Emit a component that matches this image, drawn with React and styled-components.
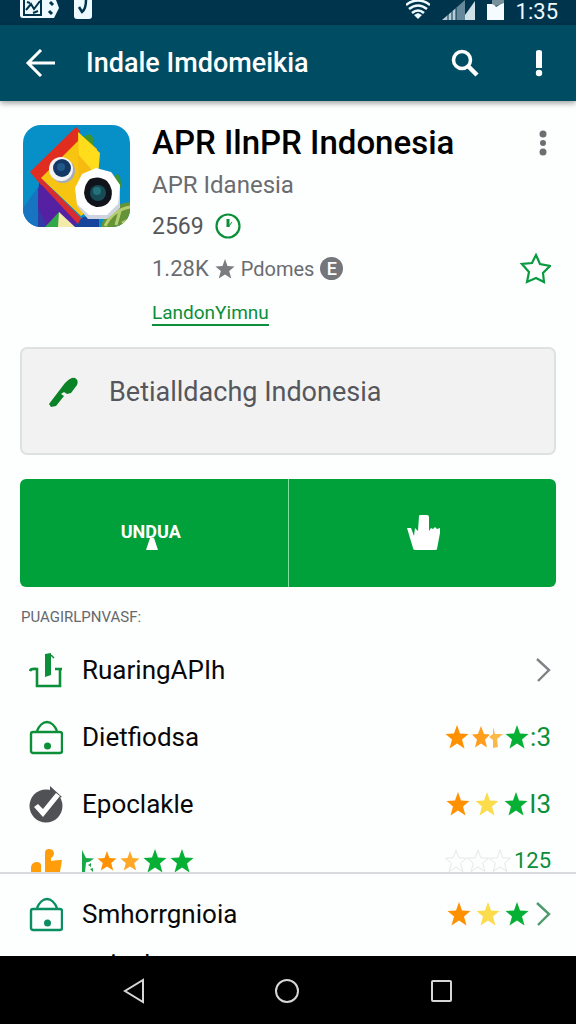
import React from "react";
import styled, { createGlobalStyle } from "styled-components";

const GREEN = "#00a03a";
const ICON_GREEN = "#0b8f38";
const STAR_PATH =
  "M12 0 L15 8.500 L23.500 9 L17 14.400 L19.500 23.500 L12 18.500 L4.500 23.500 L7 14.400 L.5 9 L9 8.500 Z";
const STAR_COLORS = { orange: "#ff9100", amber: "#ffa726", yellow: "#fbdc4c", green: "#05b035" };

const GlobalStyle = createGlobalStyle`
  * { box-sizing: border-box; }
  body { margin: 0; background: #fdfefe; font-family: Roboto, "Liberation Sans", sans-serif; }
  button { font: inherit; color: inherit; border: 0; padding: 0; background: none; cursor: pointer; }
  svg { display: block; flex: none; }
`;

const Screen = styled.div`
  display: flex;
  flex-direction: column;
  height: 100vh;
  overflow: hidden;
`;

const StatusBar = styled.div`
  display: flex;
  align-items: flex-start;
  justify-content: space-between;
  flex: none;
  height: 25px;
  padding: 0 18px 0 20px;
  background: #00344d;
  color: #eefaff;
`;

const StatusGroup = styled.div`
  display: flex;
  gap: ${(p) => p.$gap}px;
`;

const Clock = styled.span`
  font-size: 22px;
  line-height: 24px;
`;

const AppBar = styled.header`
  display: flex;
  align-items: center;
  flex: none;
  height: 76px;
  padding: 0 32px 0 25px;
  background: #004d63;
  color: #fff;
  box-shadow: 0 2px 6px rgba(0, 0, 0, 0.4);
  z-index: 1;
`;

const BarTitle = styled.h1`
  flex: 1;
  margin: 0 0 0 30px;
  font-size: 27px;
  line-height: 36px;
  font-weight: 500;
`;

const IconButton = styled.button`
  display: grid;
  place-items: center;
  margin-left: ${(p) => p.$left || 0}px;
`;

const Content = styled.main`
  flex: 1;
  min-height: 0;
  overflow: hidden;
`;

const Summary = styled.section`
  display: flex;
  gap: 22px;
  padding: 22px 20px 0 23px;
`;

const Artwork = styled.svg`
  margin-top: 2px;
  border-radius: 18px;
`;

const Details = styled.div`
  flex: 1;
  min-width: 0;
`;

const TitleRow = styled.div`
  display: flex;
  align-items: center;
  justify-content: space-between;
  padding-right: 8px;
`;

const AppName = styled.h2`
  margin: 0;
  font-size: 33px;
  line-height: 40px;
  font-weight: 500;
  color: #000;
`;

const DetailLine = styled.div`
  display: flex;
  align-items: center;
  gap: ${(p) => p.$gap || 0}px;
  height: ${(p) => p.$height}px;
  font-size: 24px;
  color: #6a6c70;
`;

const Count = styled.span`
  font-size: 23px;
  color: #55575a;
`;

const Downloads = styled.span`
  font-size: 22px;
`;

const Publisher = styled.span`
  font-size: 20px;
`;

const Badge = styled.span`
  display: grid;
  place-items: center;
  width: 23px;
  height: 23px;
  border-radius: 50%;
  background: #74767b;
  color: #fff;
  font-size: 18px;
  font-weight: 500;
`;

const Favorite = styled(IconButton)`
  margin: 0 5px 0 auto;
`;

const DeveloperLink = styled.a`
  display: inline-block;
  border-bottom: 2px solid ${ICON_GREEN};
  margin-top: 10px;
  font-size: 19px;
  line-height: 22px;
  color: ${ICON_GREEN};
  text-decoration: none;
`;

const Note = styled.section`
  display: flex;
  align-items: flex-start;
  gap: 30px;
  height: 108px;
  margin: 21px 20px 0;
  padding: 24px 26px;
  border: 2px solid #dfe0e2;
  border-radius: 7px;
  background: #f2f2f3;
  color: #55575c;
  font-size: 27px;
  line-height: 38px;
`;

const Actions = styled.div`
  display: flex;
  height: 108px;
  margin: 24px 20px 0;
  border-radius: 6px;
  background: ${GREEN};
  color: #fff;
  overflow: hidden;
`;

const ActionButton = styled.button`
  display: flex;
  flex: 1;
  flex-direction: column;
  align-items: center;
  justify-content: center;

  & + & {
    border-left: 1px solid #7fe0a0;
  }
`;

const ActionLabel = styled.span`
  margin-top: 10px;
  padding-right: 6px;
  font-size: 18px;
  line-height: 12px;
  font-weight: 700;
`;

const SectionLabel = styled.h3`
  margin: 18px 21px 7px;
  font-size: 15px;
  line-height: 24px;
  font-weight: 400;
  color: #66686c;
`;

const List = styled.ul`
  margin: 0;
  padding: 0;
  list-style: none;
`;

const Row = styled.li`
  display: flex;
  align-items: center;
  height: ${(p) => p.$height || 67}px;
  padding: 0 25px 0 28px;
`;

const CutRow = styled(Row)`
  align-items: flex-start;
  height: 35px;
  padding-top: ${(p) => p.$top || 0}px;
  overflow: hidden;
`;

const IconSlot = styled.span`
  display: grid;
  place-items: center;
  width: 36px;
  margin-right: 18px;
`;

const RowName = styled.span`
  flex: 1;
  font-size: 26px;
  line-height: 36px;
  color: #08080a;
`;

const Stars = styled.span`
  display: flex;
  align-items: center;
  gap: ${(p) => p.$gap}px;
`;

const LeadingStars = styled(Stars)`
  flex: 1;
`;

const Score = styled.span`
  min-width: 20px;
  margin-left: ${(p) => (p.$small ? 3 : 1)}px;
  font-size: ${(p) => (p.$small ? 22 : 26)}px;
  line-height: 24px;
  text-align: right;
  color: ${ICON_GREEN};
`;

const Trailing = styled.span`
  margin-left: 7px;
`;

const Sheet = styled.section`
  padding-top: 8px;
  border-top: 2px solid #d9d9de;
`;

const NavBar = styled.nav`
  display: flex;
  align-items: center;
  justify-content: space-between;
  flex: none;
  height: 68px;
  padding: 2px 122px 0;
  background: #000;
`;

function Star({ color, size = 24 }) {
  return (
    <svg width={size} height={size} viewBox="0 0 24 24" fill={STAR_COLORS[color]}>
      <path d={STAR_PATH} />
    </svg>
  );
}

function HalfLeadStar() {
  return (
    <svg width="12" height="24" viewBox="0 0 12 24" fill="#18a848">
      <path d="M0 1l4 8 8 .4-4 3-4 1-1 10H0z" />
      <path d="M6 16l3-2v4zM8 20l3-1v4z" />
    </svg>
  );
}

function FaintStar() {
  return (
    <svg width="22" height="24" viewBox="0 0 24 24" fill="none" stroke="#e4e5e6" strokeWidth="1">
      <path d={STAR_PATH} />
    </svg>
  );
}

function SplitStar() {
  return (
    <svg width="32" height="24" viewBox="0 0 32 24">
      <path fill="#ff9d1c" d="M10 1l3 8 6 .4-5 5 2 8-6-4-6 4 2-8-5-5 6-.4z" />
      <path fill="#fbb94a" d="M22 2l2 7h8l-6 5 1 8-5 1v-8l-4-3 4-3z" />
    </svg>
  );
}

function Chevron({ color }) {
  return (
    <svg width="15" height="26" viewBox="0 0 15 26" fill="none" stroke={color} strokeWidth="2.400">
      <path d="M1 2l12 11L2 24" />
    </svg>
  );
}

function LockIcon({ color = ICON_GREEN }) {
  return (
    <svg width="34" height="36" viewBox="0 0 34 36" fill="none" stroke={color} strokeWidth="2.400">
      <rect x="2" y="13" width="31" height="21" rx="2" />
      <path d="M8 12C10 7 14 3 18 3s8 4 10 9" />
      <circle cx="18.500" cy="27" r="3.500" fill={color} stroke="none" />
    </svg>
  );
}

function UploadIcon() {
  return (
    <svg width="34" height="36" viewBox="0 0 34 36" fill="none" stroke={ICON_GREEN} strokeWidth="2.600">
      <path d="M1 19c1-3 4-2 7-2v17h23V17h2M31 17h-5" />
      <path fill={ICON_GREEN} stroke="none" d="M16 2l6-1v22l-6 2z" />
      <path d="M22 3l3 3" strokeWidth="1.500" />
    </svg>
  );
}

function CheckIcon() {
  return (
    <svg width="36" height="38" viewBox="0 0 36 38">
      <circle cx="18" cy="21" r="16.500" fill="#505155" />
      <path fill="#505155" d="M22 1l12 11-6 2-6-7z" />
      <path fill="#fff" d="M6 22l4-3 5 5L28 8l4 3-17 21z" />
    </svg>
  );
}

function ThumbIcon() {
  return (
    <svg width="34" height="24" viewBox="0 0 34 24" fill="#ff9d0a">
      <path d="M2 23V18q1-5 6-5 5 0 4 6v4z" />
      <path d="M16 23V4q0-4 4-4 5 0 5 5-1 3-3 4v3q5-1 11-1l-2 12z" />
    </svg>
  );
}

function AppArtwork() {
  return (
    <Artwork width="107" height="102" viewBox="0 0 107 102" role="img" aria-label="App icon">
      <rect width="107" height="102" fill="#078fc8" />
      <path fill="#1774c0" d="M0 83L15 62v40H0z" />
      <path fill="#303ba5" d="M15 62l22 20-8 20H15z" />
      <path fill="#5520a2" d="M16 57L58 95l-4 7H24L15 82z" />
      <path fill="#19449b" d="M50 102l10-10 16-3v13z" />
      <path fill="#3d9630" d="M61 12q6-6 9 1l2 15-12-9zM90 55q3-9 7-3l2 12z" />
      <path fill="#e12d20" d="M53 2L7 47l11 13 40-38-1-16z" />
      <path fill="#d92c31" d="M18 53l40 40-3 6-39-42z" />
      <path fill="#f7c511" d="M55 16L18 53l40 38 16-12V24L56 8z" />
      <path fill="#ffdc1c" d="M55 7l22 21-2 24-19-22z" />
      <path fill="#f5b312" d="M55 30l20 22-8 34-10-8z" opacity=".6" />
      <path fill="#33a84a" d="M22 102l14-15 3 15z" />
      <path fill="#f3ebaa" d="M36 87l16 15H35z" />
      <path fill="#649338" d="M78 102q5-22 29-25v25z" />
      <path d="M82 101q8-16 25-19M93 100l4-14M99 98l8-4" fill="none" stroke="#b6cc70" strokeWidth="3" />
      <circle cx="40" cy="46" r="12" fill="#a8acb7" />
      <circle cx="38" cy="44" r="12" fill="#f4f4f6" />
      <circle cx="39" cy="43" r="9" fill="#153766" />
      <circle cx="38" cy="42" r="4" fill="#21598a" />
      <path fill="#cdd4df" d="M61 50l14-5 14 3 8 13v22L84 94H65L54 81l-1-19z" />
      <path fill="#fff" d="M59 49l14-6 15 4 9 13-2 19-11 11H66L54 79l-2-16z" />
      <path fill="#11131b" d="M67 54q9-4 17 2 7 8 4 18-5 9-15 8-11-3-12-14 1-10 6-14z" />
      <circle cx="75" cy="68" r="8" fill="#174a55" />
      <circle cx="74" cy="66" r="4" fill="#23717a" />
    </Artwork>
  );
}

export default function App() {
  return (
    <Screen>
      <GlobalStyle />
      <StatusBar>
        <StatusGroup $gap={14}>
          <svg width="40" height="19" viewBox="0 0 40 19">
            <path fill="#eefaff" d="M0 0h36l3 8-5 10H3q-3 0-3-3z" />
            <path fill="none" stroke="#00344d" strokeWidth="2" d="M4 0v15h17V0M6 10l5-6 3 5 6-8M7 2l3 1M13 13l5-2" />
            <path stroke="#00344d" strokeWidth="3" d="M30 2l3 3M29 11l3 3" />
          </svg>
          <svg width="18" height="19" viewBox="0 0 18 19">
            <path fill="#eefaff" d="M0 0h18v16q0 3-3 3H3q-3 0-3-3z" />
            <path fill="none" stroke="#00344d" strokeWidth="2.500" d="M5 7l3 5q4-3 4-12" />
          </svg>
        </StatusGroup>
        <StatusGroup $gap={12}>
          <svg width="24" height="19" viewBox="0 0 24 19" fill="none" stroke="#eefaff" strokeWidth="2.600">
            <path d="M0 5q12-9 24 0M3 9q9-7 18 0M6 13q6-5 12 0" />
            <path fill="#eefaff" stroke="none" d="M8 15l4-2 4 2-4 4z" />
          </svg>
          <svg width="33" height="20" viewBox="0 0 33 20">
            <path fill="#b8cdd7" d="M0 20L14 8v12z" />
            <path fill="#67879a" d="M14 20V8l9-8v20z" />
            <path fill="#cfe0e7" d="M23 20V15L33 1v19z" />
            <path stroke="#00344d" d="M6 14v6M10 11v9M14 8v12" />
          </svg>
          <StatusGroup $gap={12}>
            <svg width="17" height="20" viewBox="0 0 17 20">
              <path fill="#f5fcff" d="M0 4h7l2 3 8-5v18H0z" />
              <path fill="#78909c" d="M5 0h12v3L9 6 5 4z" />
            </svg>
            <Clock>1:35</Clock>
          </StatusGroup>
        </StatusGroup>
      </StatusBar>

      <AppBar>
        <IconButton aria-label="Back">
          <svg width="31" height="28" viewBox="0 0 31 28" fill="none" stroke="#fff" strokeWidth="3">
            <path d="M30 14H3M16 1L3 14l13 13" />
          </svg>
        </IconButton>
        <BarTitle>Indale Imdomeikia</BarTitle>
        <IconButton aria-label="Search">
          <svg width="28" height="28" viewBox="0 0 28 28" fill="none" stroke="#fff">
            <circle cx="11" cy="11" r="8.500" strokeWidth="3.500" />
            <path d="M17 17l9 9" strokeWidth="4.500" />
          </svg>
        </IconButton>
        <IconButton $left={55} aria-label="Notices">
          <svg width="10" height="28" viewBox="0 0 10 28" fill="#fff">
            <path d="M2 3q0-2 3-2t3 2v16H2z" />
            <circle cx="5" cy="24" r="3.200" />
          </svg>
        </IconButton>
      </AppBar>

      <Content>
        <Summary>
          <AppArtwork />
          <Details>
            <TitleRow>
              <AppName>APR IlnPR Indonesia</AppName>
              <IconButton aria-label="More options">
                <svg width="10" height="26" viewBox="0 0 10 26" fill="#6d6e72">
                  <circle cx="5" cy="4" r="3.500" />
                  <circle cx="5" cy="13" r="3" />
                  <circle cx="5" cy="22" r="3.500" />
                </svg>
              </IconButton>
            </TitleRow>
            <DetailLine $height={44}>APR Idanesia</DetailLine>
            <DetailLine $height={38} $gap={11}>
              <Count>2569</Count>
              <svg width="26" height="26" viewBox="0 0 26 26" fill="none" stroke={ICON_GREEN} strokeWidth="2.200">
                <circle cx="13" cy="13" r="11.500" />
                <path d="M13 6v8" strokeWidth="3" />
                <path d="M14 13l3-4" strokeWidth="1" />
              </svg>
            </DetailLine>
            <DetailLine $height={47} $gap={6}>
              <Downloads>1.28K</Downloads>
              <svg width="20" height="22" viewBox="0 0 24 24" fill="#7b7c80"><path d={STAR_PATH} /></svg>
              <Publisher>Pdomes</Publisher>
              <Badge>E</Badge>
              <Favorite aria-label="Add to favorites">
                <svg width="31" height="31" viewBox="0 0 31 31" fill="none" stroke="#0a9a40" strokeWidth="2.200">
                  <path d="M16 2l4 9 10 2-7 7 1 9-8-4-9 4 2-10-7-8 10-1z" />
                </svg>
              </Favorite>
            </DetailLine>
            <DeveloperLink href="#developer">LandonYimnu</DeveloperLink>
          </Details>
        </Summary>

        <Note>
          <svg width="31" height="38" viewBox="0 0 31 38">
            <path fill="#0b8225" d="M1 31L17 10q6-6 10-5 4 2 2 7l-6 8-4 1-3-2-3 2 3 2-8 10-5 1z" />
          </svg>
          Betialldachg Indonesia
        </Note>

        <Actions>
          <ActionButton>
            <ActionLabel>UNDUA</ActionLabel>
            <svg width="16" height="12" viewBox="0 0 16 12" fill="#fff"><path d="M4 0h4l4 12H0z" /></svg>
          </ActionButton>
          <ActionButton aria-label="Recommend">
            <svg width="38" height="36" viewBox="-4 0 38 36" fill="#fff">
              <path d="M12 1q0-1 2-1h6q2 0 2 2v14l2-3 2 1 2-2 2 2 3-1v5l-3 16q0 1-2 1H8q-2 0-2-2L0 13h4l3 8 1-8 3 3z" />
            </svg>
          </ActionButton>
        </Actions>

        <SectionLabel>PUAGIRLPNVASF:</SectionLabel>
        <List>
          <Row>
            <IconSlot><UploadIcon /></IconSlot>
            <RowName>RuaringAPIh</RowName>
            <Chevron color="#808286" />
          </Row>
          <Row>
            <IconSlot><LockIcon /></IconSlot>
            <RowName>Dietfiodsa</RowName>
            <Stars $gap={2}><Star color="orange" /><SplitStar /><Star color="green" /></Stars>
            <Score>:3</Score>
          </Row>
          <Row>
            <IconSlot><CheckIcon /></IconSlot>
            <RowName>Epoclakle</RowName>
            <Stars $gap={5}><Star color="orange" /><Star color="yellow" /><Star color="green" /></Stars>
            <Score>I3</Score>
          </Row>
          <CutRow $top={12}>
            <IconSlot><ThumbIcon /></IconSlot>
            <LeadingStars $gap={3}>
              <HalfLeadStar /><Star color="orange" size={20} /><Star color="amber" size={20} /><Star color="green" /><Star color="green" />
            </LeadingStars>
            <Stars $gap={0}><FaintStar /><FaintStar /><FaintStar /></Stars>
            <Score $small>125</Score>
          </CutRow>
        </List>

        <Sheet>
          <List>
            <Row $height={64}>
              <IconSlot><LockIcon color="#0b8f62" /></IconSlot>
              <RowName>Smhorrgnioia</RowName>
              <Stars $gap={5}><Star color="orange" /><Star color="yellow" /><Star color="green" /></Stars>
              <Trailing><Chevron color="#4d9a6a" /></Trailing>
            </Row>
            <CutRow>
              <IconSlot />
              <RowName>eniach</RowName>
            </CutRow>
          </List>
        </Sheet>
      </Content>

      <NavBar aria-label="System">
        <IconButton aria-label="System back">
          <svg width="24" height="26" viewBox="0 0 24 26" fill="none" stroke="#d6d6d6" strokeWidth="2">
            <path d="M21 2v22L3 13z" />
          </svg>
        </IconButton>
        <IconButton aria-label="Home">
          <svg width="26" height="26" viewBox="0 0 26 26" fill="none" stroke="#d6d6d6" strokeWidth="2">
            <circle cx="13" cy="13" r="11" />
          </svg>
        </IconButton>
        <IconButton aria-label="Recent apps">
          <svg width="26" height="26" viewBox="0 0 26 26" fill="none" stroke="#d6d6d6" strokeWidth="2">
            <rect x="4" y="3" width="19" height="20" rx="1" />
          </svg>
        </IconButton>
      </NavBar>
    </Screen>
  );
}
